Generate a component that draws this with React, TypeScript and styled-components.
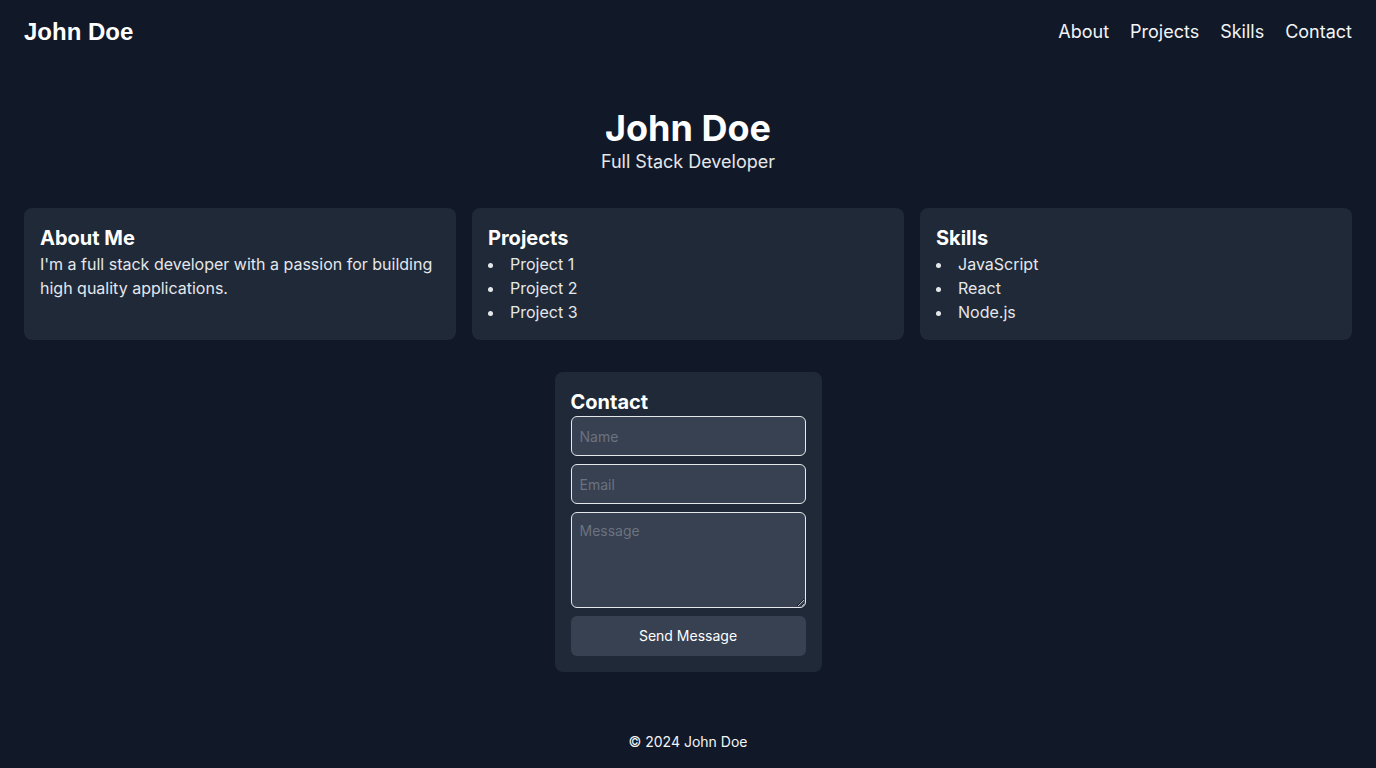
import React from "react";
import styled, { createGlobalStyle } from "styled-components";

const Global = createGlobalStyle`
  * { box-sizing: border-box; }
  html, body { margin: 0; padding: 0; background: #111827; }
  body {
    font-family: Inter, "Noto Sans", sans-serif;
    color: #fff;
  }
`;

const Page = styled.div`
  min-height: 768px;
  display: flex;
  flex-direction: column;
  background: #111827;
`;

const Header = styled.header`
  height: 64px;
  padding: 0 24px;
  display: flex;
  align-items: center;
  justify-content: space-between;
`;

const Logo = styled.div`
  font-family: "Liberation Sans", Arial, sans-serif;
  font-weight: 700;
  font-size: 24px;
  line-height: 32px;
`;

const Nav = styled.nav`
  display: flex;
  gap: 21px;
`;

const NavLink = styled.a`
  font-size: 18px;
  line-height: 28px;
  color: #f3f4f6;
  text-decoration: none;
`;

const Main = styled.main`
  padding: 44px 24px 0;
  display: flex;
  flex-direction: column;
  align-items: center;
`;

const Hero = styled.section`
  text-align: center;
  margin-bottom: 32px;
`;

const HeroTitle = styled.h1`
  margin: 0;
  font-size: 36px;
  line-height: 40px;
  font-weight: 700;
`;

const HeroSub = styled.p`
  margin: 0;
  font-size: 18px;
  line-height: 28px;
  color: #e5e7eb;
`;

const Grid = styled.div`
  width: 100%;
  display: grid;
  grid-template-columns: repeat(3, 1fr);
  gap: 16px;
  margin-bottom: 32px;
`;

const Card = styled.section`
  background: #1f2937;
  border-radius: 8px;
  padding: 16px;
`;

const CardTitle = styled.h2`
  margin: 0;
  font-size: 20px;
  line-height: 28px;
  font-weight: 700;
`;

const Text = styled.p`
  margin: 0;
  font-size: 16px;
  line-height: 24px;
  color: #e5e7eb;
`;

const List = styled.ul`
  margin: 0;
  padding: 0;
  list-style: disc inside;
`;

const Item = styled.li`
  font-size: 16px;
  line-height: 24px;
  color: #e5e7eb;
`;

const ContactCard = styled(Card)`
  width: 267px;
`;

const Form = styled.form`
  display: flex;
  flex-direction: column;
  gap: 8px;
`;

const Input = styled.input`
  height: 40px;
  width: 100%;
  padding: 8px;
  background: #374151;
  border: 1px solid #e5e7eb;
  border-radius: 6px;
  color: #fff;
  font-family: Inter, sans-serif;
  font-size: 14px;
  outline: none;
  &::placeholder { color: #6b7280; }
`;

const Area = styled.textarea`
  height: 96px;
  width: 100%;
  padding: 8px;
  background: #374151;
  border: 1px solid #e5e7eb;
  border-radius: 6px;
  color: #fff;
  font-family: Inter, sans-serif;
  font-size: 14px;
  line-height: 20px;
  outline: none;
  display: block;
  &::placeholder { color: #6b7280; }
`;

const Button = styled.button`
  height: 40px;
  width: 100%;
  padding: 0 0 2px;
  background: #374151;
  border: none;
  border-radius: 6px;
  color: #fff;
  font-family: Inter, sans-serif;
  font-size: 14px;
  font-weight: 400;
`;

const Footer = styled.footer`
  margin-top: auto;
  padding: 16px;
  text-align: center;
  font-size: 14px;
  line-height: 20px;
  color: #f3f4f6;
`;

export default function App() {
  return (
    <Page>
      <Global />
      <Header>
        <Logo>John Doe</Logo>
        <Nav>
          <NavLink href="#about">About</NavLink>
          <NavLink href="#projects">Projects</NavLink>
          <NavLink href="#skills">Skills</NavLink>
          <NavLink href="#contact">Contact</NavLink>
        </Nav>
      </Header>
      <Main>
        <Hero>
          <HeroTitle>John Doe</HeroTitle>
          <HeroSub>Full Stack Developer</HeroSub>
        </Hero>
        <Grid>
          <Card>
            <CardTitle>About Me</CardTitle>
            <Text>I'm a full stack developer with a passion for building high quality applications.</Text>
          </Card>
          <Card>
            <CardTitle>Projects</CardTitle>
            <List>
              <Item>Project 1</Item>
              <Item>Project 2</Item>
              <Item>Project 3</Item>
            </List>
          </Card>
          <Card>
            <CardTitle>Skills</CardTitle>
            <List>
              <Item>JavaScript</Item>
              <Item>React</Item>
              <Item>Node.js</Item>
            </List>
          </Card>
        </Grid>
        <ContactCard>
          <CardTitle>Contact</CardTitle>
          <Form onSubmit={(e) => e.preventDefault()}>
            <Input placeholder="Name" />
            <Input placeholder="Email" />
            <Area placeholder="Message" />
            <Button type="submit">Send Message</Button>
          </Form>
        </ContactCard>
      </Main>
      <Footer>© 2024 John Doe</Footer>
    </Page>
  );
}
